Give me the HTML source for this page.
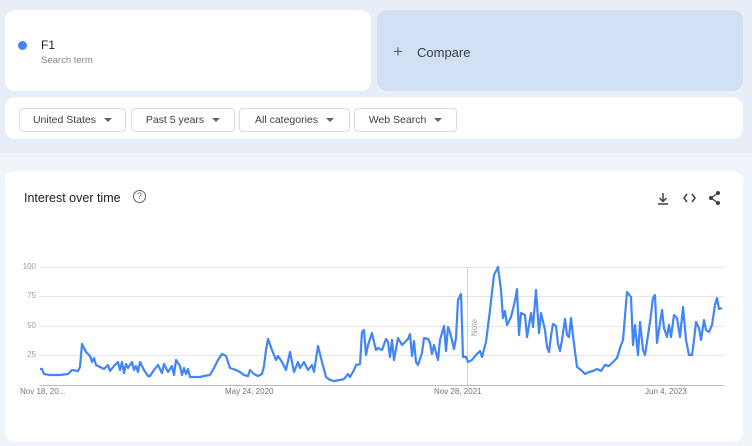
<!DOCTYPE html>
<html><head><style>
body{margin:0;width:752px;height:446px;background:#f0f3f9;font-family:"Liberation Sans",sans-serif;position:relative;overflow:hidden}
.top{position:absolute;left:0;top:0;width:752px;height:153px;background:#e8eef7}
.card{position:absolute;background:#fff;border-radius:10px}
.btn{position:absolute;top:108px;height:22px;border:1px solid #dadce0;border-radius:4px;font-size:10.5px;color:#3c4043;line-height:22px;text-align:center;background:#fff}
.tri{display:inline-block;width:0;height:0;border-left:4px solid transparent;border-right:4px solid transparent;border-top:4px solid #5f6368;margin-left:8px;vertical-align:middle}
.yl{position:absolute;left:22px;font-size:8px;color:#9aa0a6;width:14px;text-align:right}
.xl{position:absolute;top:387px;font-size:8px;color:#70757a}
</style></head><body>
<div class="top"></div>
<div class="card" style="left:5px;top:10px;width:366px;height:81px"></div>
<div style="position:absolute;left:18px;top:41px;width:9px;height:9px;border-radius:50%;background:#4285f4"></div>
<div style="position:absolute;left:41px;top:38px;font-size:12px;color:#202124">F1</div>
<div style="position:absolute;left:41px;top:55px;font-size:9.5px;color:#80868b">Search term</div>
<div style="position:absolute;left:377px;top:10px;width:366px;height:81px;background:#d2e0f3;border-radius:10px"></div>
<div style="position:absolute;left:393px;top:42px;font-size:17px;color:#5f6368;font-weight:300">+</div>
<div style="position:absolute;left:417px;top:45px;font-size:13px;color:#3c4043">Compare</div>
<div class="card" style="left:5px;top:97px;width:738px;height:42px"></div>
<div class="btn" style="left:19px;width:105px">United States<span class="tri"></span></div>
<div class="btn" style="left:131px;width:102px">Past 5 years<span class="tri"></span></div>
<div class="btn" style="left:239px;width:109px">All categories<span class="tri"></span></div>
<div class="btn" style="left:354px;width:101px">Web Search<span class="tri"></span></div>
<div class="card" style="left:5px;top:171px;width:738px;height:271px"></div>
<div style="position:absolute;left:24px;top:191px;font-size:12.5px;color:#202124">Interest over time</div>
<div style="position:absolute;left:133px;top:190px;width:11px;height:11px;border:1.3px solid #5f6368;border-radius:50%;font-size:9px;color:#5f6368;text-align:center;line-height:11px">?</div>
<svg style="position:absolute;left:0;top:0" width="752" height="446">
<g stroke="#3c4043" stroke-width="1.5" fill="none">
<path d="M663 193v8M659.5 198l3.5 3.5 3.5-3.5M658 204h10"/>
<path d="M687 194l-3 4 3 4M692 194l3 4-3 4"/>
</g>
<g fill="#3c4043"><circle cx="718" cy="193" r="2"/><circle cx="711" cy="198" r="2"/><circle cx="718" cy="203" r="2"/></g>
<path d="M718 193l-7 5 7 5" stroke="#3c4043" stroke-width="1.2" fill="none"/>
<g stroke="#e6e6e6" stroke-width="1"><path d="M39 267.5H724M39 296.5H724M39 326.5H724M39 355.5H724"/></g>
<path d="M39 385.5H724" stroke="#bdbdbd"/>
<path d="M467.5 267V385" stroke="#cfcfcf"/>
<text x="477" y="336" transform="rotate(-90 477 336)" font-size="8" fill="#9aa0a6" font-family="Liberation Sans">Note</text>
<polyline fill="none" stroke="#4285f4" stroke-width="2.2" stroke-linejoin="round" points="40,369 42,369 44,374 50,375 60,375 68,374 72,370 78,371 80,367 82,344 86,352 90,356 92,362 94,358 96,365 100,367 104,369 108,365 110,371 114,366 118,362 120,370 122,362 124,373 126,364 128,368 132,362 134,370 136,366 138,372 140,362 144,370 148,376 150,376 154,370 158,365 162,373 164,364 168,372 172,366 174,375 176,360 180,366 182,375 184,368 186,374 188,369 190,377 194,377 200,377 204,376 210,375 214,368 218,360 222,354 226,356 230,368 236,370 240,372 244,375 248,376 250,370 254,374 258,376 262,374 264,366 266,350 268,339 272,350 276,360 278,356 282,362 286,370 290,352 294,372 298,362 300,368 304,362 308,370 312,365 314,372 318,346 322,362 326,377 330,380 334,381 340,380 344,379 348,374 350,377 354,370 356,365 360,364 362,332 364,330 366,355 368,345 372,333 374,342 376,350 378,348 382,350 386,339 388,342 390,357 392,340 394,360 398,338 402,345 404,343 408,339 410,334 412,356 414,341 416,362 418,365 422,353 424,338 428,339 430,343 432,354 434,345 438,360 440,340 444,326 446,351 448,327 450,332 454,349 456,338 458,300 461,294 463,357 466,357 468,362 472,360 476,355 480,351 482,357 486,342 490,310 494,275 498,267 501,290 503,318 505,311 507,325 511,317 515,301 517,289 519,335 521,313 525,315 527,337 531,313 533,327 536,290 539,333 541,313 545,330 547,347 549,352 551,336 553,324 556,326 558,344 560,351 562,340 565,319 567,335 569,337 571,318 573,336 577,367 581,370 585,374 589,372 593,371 597,369 601,371 605,365 609,366 613,362 617,358 621,345 623,340 627,292 631,297 633,345 635,325 638,355 640,322 643,350 645,355 650,322 653,298 655,295 657,343 662,310 664,328 667,337 669,325 671,337 674,315 677,318 680,337 683,307 686,340 689,355 692,355 694,340 696,322 699,328 701,340 704,320 706,330 709,332 712,325 715,305 717,298 719,309 722,308"/>
</svg>
<div class="yl" style="top:262px">100</div>
<div class="yl" style="top:291px">75</div>
<div class="yl" style="top:321px">50</div>
<div class="yl" style="top:350px">25</div>
<div class="xl" style="left:20px">Nov 18, 20...</div>
<div class="xl" style="left:225px">May 24, 2020</div>
<div class="xl" style="left:434px">Nov 28, 2021</div>
<div class="xl" style="left:645px">Jun 4, 2023</div>
</body></html>
